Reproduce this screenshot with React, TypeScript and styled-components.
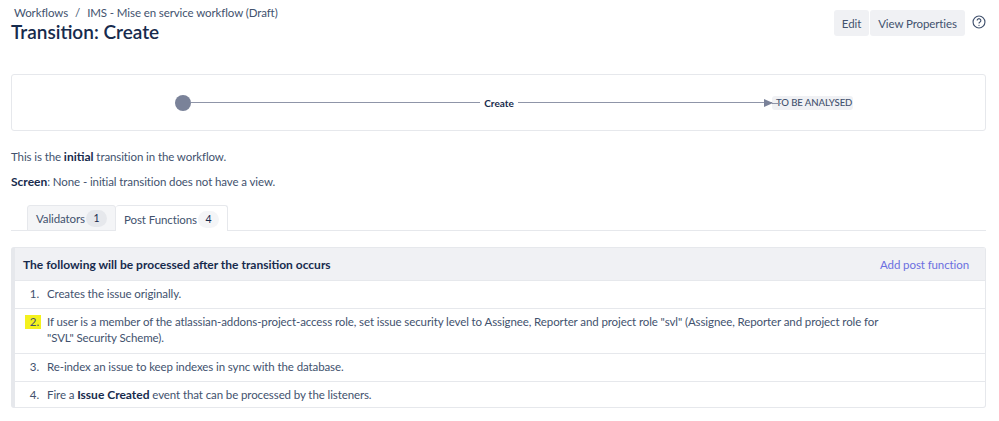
import React from 'react';
import styled, { createGlobalStyle } from 'styled-components';

const GlobalStyle = createGlobalStyle`
  html, body {
    margin: 0;
    padding: 0;
    background: #fff;
  }
  body {
    font-family: Lato, "Noto Sans", sans-serif;
    font-size: 11.5px;
    letter-spacing: -0.1px;
    color: #42526e;
  }
  b, strong {
    font-size: 12px;
    font-weight: 700;
    letter-spacing: 0;
    color: #172b4d;
  }
`;

const Page = styled.div`
  width: 999px;
  height: 421px;
  box-sizing: border-box;
  padding: 6px 13px 0 11px;
  overflow: hidden;
`;

const Header = styled.header`
  display: flex;
  justify-content: space-between;
  align-items: flex-start;
  height: 68px;
`;

const Breadcrumbs = styled.div`
  display: flex;
  gap: 7px;
  padding-left: 3px;
  line-height: 14px;
  color: #42526e;
`;

const Title = styled.h1`
  margin: 0;
  font-size: 19px;
  line-height: 24px;
  font-weight: 600;
  letter-spacing: 0;
  color: #172b4d;
`;

const Actions = styled.div`
  display: flex;
  align-items: center;
  gap: 1px;
  padding-top: 4px;
`;

const Button = styled.button<{ $width: number }>`
  width: ${({ $width }) => $width}px;
  height: 26px;
  padding: 0;
  border: 0;
  border-radius: 3px;
  background: #f0f1f4;
  color: #42526e;
  font: inherit;
  letter-spacing: inherit;
`;

const HelpIcon = styled.svg`
  width: 14px;
  height: 14px;
  margin-left: 6px;
  margin-top: -3px;
`;

const Diagram = styled.div`
  display: flex;
  align-items: center;
  height: 57px;
  box-sizing: border-box;
  padding: 0 0 0 163px;
  margin-bottom: 18px;
  border: 1px solid #e6e8ec;
  border-radius: 3px;
`;

const StartNode = styled.span`
  flex: none;
  width: 16px;
  height: 16px;
  border-radius: 50%;
  background: #7a8299;
`;

const Line = styled.span<{ $width: number }>`
  flex: none;
  width: ${({ $width }) => $width}px;
  height: 1px;
  background: #8f95a8;
`;

const TransitionName = styled.b`
  flex: none;
  width: 38px;
  text-align: center;
  font-size: 10px;
`;

const ArrowHead = styled.span`
  flex: none;
  position: relative;
  z-index: 1;
  margin-left: -12px;
  width: 0;
  height: 0;
  border-left: 9px solid #7a8299;
  border-top: 4px solid transparent;
  border-bottom: 4px solid transparent;
`;

const StatusBadge = styled.span`
  position: relative;
  flex: none;
  width: 81px;
  height: 14px;
  box-sizing: border-box;
  margin-left: -1px;
  padding-left: 4px;
  border-radius: 3px;
  background: #f0f1f4;
  color: #42526e;
  font-size: 9.6px;
  font-weight: 500;
  line-height: 14px;
  white-space: nowrap;
  &::after {
    content: '';
    position: absolute;
    left: 0;
    width: 9px;
    top: 7px;
    height: 1px;
    background: #8f95a8;
  }
`;

const Paragraph = styled.p`
  margin: 0 0 10px;
  line-height: 15px;
`;

const Tabs = styled.div`
  display: flex;
  height: 26px;
  box-sizing: border-box;
  margin-top: 16px;
  margin-bottom: 16px;
  padding-left: 16px;
  border-bottom: 1px solid #e6e8ec;
`;

const Tab = styled.div<{ $active?: boolean; $width: number }>`
  display: flex;
  align-items: center;
  justify-content: space-between;
  flex: none;
  width: ${({ $width }) => $width}px;
  height: 26px;
  box-sizing: border-box;
  padding: 1px 8px 0;
  border: 1px solid #e6e8ec;
  border-bottom: ${({ $active }) => ($active ? '0' : '1px solid #e6e8ec')};
  border-left: ${({ $active }) => ($active ? '0' : '1px solid #e6e8ec')};
  border-radius: 3px 3px 0 0;
  background: ${({ $active }) => ($active ? '#fff' : '#f4f5f7')};
  white-space: nowrap;
`;

const Count = styled.span<{ $active?: boolean }>`
  min-width: 21px;
  height: 17px;
  border-radius: 9px;
  background: ${({ $active }) => ($active ? '#f4f5f7' : '#e6e8ec')};
  color: #172b4d;
  font-size: 10.5px;
  line-height: 17px;
  text-align: center;
`;

const Panel = styled.section`
  width: 975px;
  box-sizing: border-box;
  border: 1px solid #e6e8ec;
  border-left: 4px solid #e6e8ec;
  border-radius: 3px;
`;

const PanelHeader = styled.div`
  display: flex;
  justify-content: space-between;
  align-items: center;
  height: 33px;
  box-sizing: border-box;
  padding: 0 16px 0 8px;
  background: #f0f1f4;
  border-bottom: 1px solid #e6e8ec;
`;

const AddLink = styled.a`
  color: #6b6fe0;
`;

const Functions = styled.ol`
  margin: 0;
  padding: 0;
  list-style: none;
`;

const FunctionRow = styled.li<{ $height: number }>`
  display: flex;
  height: ${({ $height }) => $height}px;
  box-sizing: border-box;
  padding: 5px 90px 0 10px;
  line-height: 16px;
  border-bottom: 1px solid #e6e8ec;
  &:last-child {
    border-bottom: 0;
  }
`;

const FunctionNumber = styled.span<{ $marked?: boolean }>`
  flex: none;
  width: 16px;
  height: 14px;
  margin-top: 1px;
  margin-right: 6px;
  line-height: 14px;
  text-align: right;
  padding-right: 2px;
  box-sizing: border-box;
  background: ${({ $marked }) => ($marked ? '#f4f11e' : 'transparent')};
`;

export default function App() {
  return (
    <Page>
      <GlobalStyle />
      <Header>
        <div>
          <Breadcrumbs>
            <span>Workflows</span>
            <span>/</span>
            <span>IMS - Mise en service workflow (Draft)</span>
          </Breadcrumbs>
          <Title>Transition: Create</Title>
        </div>
        <Actions>
          <Button $width={35}>Edit</Button>
          <Button $width={95}>View Properties</Button>
          <HelpIcon viewBox="0 0 16 16" fill="none" stroke="#42526e">
            <circle cx="8" cy="8" r="6.8" strokeWidth="1.3" />
            <path d="M5.9 6.3a2.1 2.1 0 1 1 3.2 1.8c-.7.4-1.1.8-1.1 1.7" strokeWidth="1.3" />
            <circle cx="8" cy="11.8" r=".8" fill="#42526e" stroke="none" />
          </HelpIcon>
        </Actions>
      </Header>

      <Diagram>
        <StartNode />
        <Line $width={289} />
        <TransitionName>Create</TransitionName>
        <Line $width={258} />
        <ArrowHead />
        <StatusBadge>TO BE ANALYSED</StatusBadge>
      </Diagram>

      <Paragraph>
        This is the <b>initial</b> transition in the workflow.
      </Paragraph>
      <Paragraph>
        <b>Screen</b>: None - initial transition does not have a view.
      </Paragraph>

      <Tabs>
        <Tab $width={89}>
          Validators <Count>1</Count>
        </Tab>
        <Tab $active $width={112}>
          Post Functions <Count $active>4</Count>
        </Tab>
      </Tabs>

      <Panel>
        <PanelHeader>
          <strong>The following will be processed after the transition occurs</strong>
          <AddLink>Add post function</AddLink>
        </PanelHeader>
        <Functions>
          <FunctionRow $height={28}>
            <FunctionNumber>1.</FunctionNumber>
            <span>Creates the issue originally.</span>
          </FunctionRow>
          <FunctionRow $height={45}>
            <FunctionNumber $marked>2.</FunctionNumber>
            <span>
              If user is a member of the atlassian-addons-project-access role, set issue security level to
              Assignee, Reporter and project role "svl" (Assignee, Reporter and project role for "SVL" Security
              Scheme).
            </span>
          </FunctionRow>
          <FunctionRow $height={28}>
            <FunctionNumber>3.</FunctionNumber>
            <span>Re-index an issue to keep indexes in sync with the database.</span>
          </FunctionRow>
          <FunctionRow $height={25}>
            <FunctionNumber>4.</FunctionNumber>
            <span>
              Fire a <b>Issue Created</b> event that can be processed by the listeners.
            </span>
          </FunctionRow>
        </Functions>
      </Panel>
    </Page>
  );
}
